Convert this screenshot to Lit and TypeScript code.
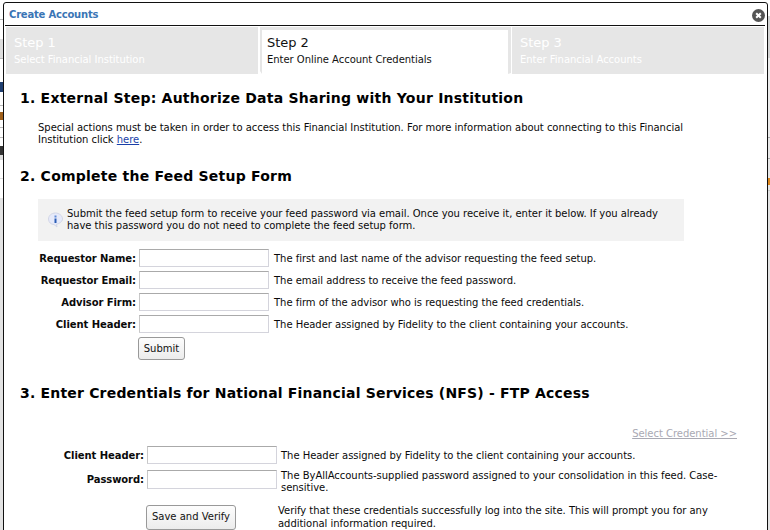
import { LitElement, html, css } from "lit";
import { customElement } from "lit/decorators.js";

@customElement("app-root")
export class AppRoot extends LitElement {
  static styles = css`
    :host { display: block; position: relative; width: 770px; height: 530px; overflow: hidden; font-family: "DejaVu Sans", Verdana, sans-serif; font-size: 10px; letter-spacing: -0.03px; color: #0a0a0a; line-height: 12px;
      background-color: #fff;
      background-image:
        linear-gradient(to bottom, #fff 0 19px, #bbb 19px 20px, #fff 20px 39px, #ddd 39px 58px, #bbb 58px 59px, #fff 59px 82px, #1f3f70 82px 92px, #fff 92px 105px, #bbb 105px 106px, #fff 106px 112px, #a0601a 112px 120px, #fff 120px 127px, #bbb 127px 128px, #fff 128px 137px, #bbb 137px 138px, #fff 138px 146px, #333 146px 155px, #ddd 155px 160px, #fff 160px 178px, #ddd 178px 179px, #fff 179px 198px, #e2e2e2 198px),
        linear-gradient(to bottom, #fff 0 16px, #d4d4d4 16px 58px, #ececec 58px 137px, #aaa 137px 138px, #e8e8e8 138px 158px, #aaa 158px 159px, #e8e8e8 159px 178px, #e08a20 178px 185px, #e8e8e8 185px 190px, #ccc 190px 191px, #e4e4e4 191px);
      background-size: 3px 100%, 2px 100%;
      background-position: left top, right top;
      background-repeat: no-repeat;
    }
    .dialog { position: absolute; left: 3px; top: 2px; width: 765px; height: 560px; border: 1px solid #111; border-radius: 3px 3px 0 0; box-sizing: border-box; background: #fff; padding: 0 2px 0 1px; }
    .title { height: 23px; border-bottom: 1px solid #111; display: flex; align-items: center; justify-content: space-between; padding: 2px 0 0 4px; box-sizing: border-box; }
    .title b { color: #3a75b5; font-size: 10px; letter-spacing: -0.2px; }
    .close { display: block; margin-right: 0; }
    .tabs { display: flex; margin: 1px 1px 0 1px; height: 47px; }
    .tab { background: #e6e6e6; color: #fff; padding: 7px 8px 0 8px; box-sizing: border-box; width: 252px; }
    .tab.active { width: 251px; margin: 0 1px 0 2px; background: #fff; color: #111; border-top: 3px solid #e6e6e6; border-left: 2px solid #e6e6e6; border-right: 3px solid #e6e6e6; padding: 4px 0 0 5px; clip-path: polygon(0 0, 100% 0, 100% calc(100% - 1px), calc(100% - 3px) 100%, 2px 100%, 0 calc(100% - 3px)); }
    .tab .big { font-size: 13px; line-height: 18px; }
    .tab .small { margin-top: 2px; display: block; }
    .content { padding: 15px 0 0 15px; }
    h2 { margin: 0; font-size: 14px; line-height: 18px; letter-spacing: 0.23px; font-weight: bold; color: #000; }
    .intro { margin: 15px 0 0 18px; width: 660px; line-height: 12px; }
    a { color: #1a3fa8; }
    .h2b { margin-top: 21px; }
    .note { margin: 14px 0 0 18px; width: 646px; height: 42px; background: #f2f2f2; display: flex; align-items: center; gap: 4px; padding: 0 8px 0 10px; box-sizing: border-box; }
    .note svg { flex: none; }
    .rows { display: grid; grid-template-columns: 116px 130px 1fr; column-gap: 3px; row-gap: 4px; margin-top: 8px; align-items: center; }
    .rows label, .rows .hint, .first { padding-top: 2px; }
    label { font-weight: bold; text-align: right; white-space: nowrap; letter-spacing: -0.07px; }
    input { width: 130px; height: 18px; box-sizing: border-box; border: 1px solid #d4d4dc; border-top-color: #aaa; border-left-color: #c8c8c8; padding: 0; margin: 0; background: #fff; display: block; }
    .hint { margin-left: 2px; }
    button { font: inherit; color: #111; height: 23px; padding: 0; border: 1px solid #999; border-radius: 3px; background: linear-gradient(#fdfdfd, #ececec); margin: 0; }
    .submit { grid-column: 2; justify-self: start; margin: 0 0 0 -1px; width: 47px; }
    .h2c { margin-top: 24px; }
    h2.h2c { letter-spacing: 0.19px; }
    .sel { text-align: right; margin: 26px 28px 0 0; color: #a9a9b3; text-decoration: underline; }
    .rows2 { display: grid; grid-template-columns: 124px 130px 1fr; column-gap: 3px; row-gap: 6px; margin-top: 6px; align-items: center; margin-right: 29px; }
    .rows2 .hint { margin-left: 1px; }
    .rows2 .tall { height: 19px; align-self: start; }
    .rows2 .pw { align-self: start; padding-top: 4px; }
    .save { display: flex; margin: 10px 30px 0 126px; align-items: center; gap: 42px; }
    .save button { flex: none; height: 25px; width: 90px; }
    .save div { width: 450px; line-height: 13px; }
  `;

  render() {
    return html`<div class="dialog">
      <div class="title"><b>Create Accounts</b>
        <svg class="close" width="13" height="13" viewBox="0 0 13 13"><circle cx="6.5" cy="6.5" r="6.500" fill="#555"/><path d="M4.200 4.200l4.600 4.600M8.800 4.200l-4.600 4.600" stroke="#fff" stroke-width="2"/></svg>
      </div>
      <div class="tabs">
        <div class="tab"><div class="big">Step 1</div><span class="small">Select Financial Institution</span></div>
        <div class="tab active"><div class="big">Step 2</div><span class="small">Enter Online Account Credentials</span></div>
        <div class="tab"><div class="big">Step 3</div><span class="small">Enter Financial Accounts</span></div>
      </div>
      <div class="content">
        <h2>1. External Step: Authorize Data Sharing with Your Institution</h2>
        <div class="intro">Special actions must be taken in order to access this Financial Institution. For more information about connecting to this Financial Institution click <a href="#">here</a>.</div>
        <h2 class="h2b">2. Complete the Feed Setup Form</h2>
        <div class="note">
          <svg width="15" height="16" viewBox="0 0 15 16"><path d="M7.500 1C3.500 1 .5 3.600 .5 7s2.500 5.500 5.500 5.500l3 2.500-.5-2.700c3-.8 6-2.800 6-5.300C14.500 3.600 11 1 7.500 1z" fill="#e6eafa" stroke="#d2d6e6"/><rect x="6.500" y="3.500" width="2" height="2" fill="#5f8ad6"/><rect x="6.500" y="6.500" width="2" height="4.500" fill="#2a5cb5"/></svg>
          <span>Submit the feed setup form to receive your feed password via email. Once you receive it, enter it below. If you already have this password you do not need to complete the feed setup form.</span>
        </div>
        <div class="rows">
          <label>Requestor Name:</label><input /><span class="hint">The first and last name of the advisor requesting the feed setup.</span>
          <label>Requestor Email:</label><input /><span class="hint">The email address to receive the feed password.</span>
          <label>Advisor Firm:</label><input /><span class="hint">The firm of the advisor who is requesting the feed credentials.</span>
          <label>Client Header:</label><input /><span class="hint">The Header assigned by Fidelity to the client containing your accounts.</span>
          <button class="submit">Submit</button>
        </div>
        <h2 class="h2c">3. Enter Credentials for National Financial Services (NFS) - FTP Access</h2>
        <div class="sel">Select Credential &gt;&gt;</div>
        <div class="rows2">
          <label class="first">Client Header:</label><input /><span class="hint first">The Header assigned by Fidelity to the client containing your accounts.</span>
          <label class="pw">Password:</label><input class="tall" /><span class="hint">The ByAllAccounts-supplied password assigned to your consolidation in this feed. Case-sensitive.</span>
        </div>
        <div class="save"><button>Save and Verify</button><div>Verify that these credentials successfully log into the site. This will prompt you for any additional information required.</div></div>
      </div>
    </div>`;
  }
}
